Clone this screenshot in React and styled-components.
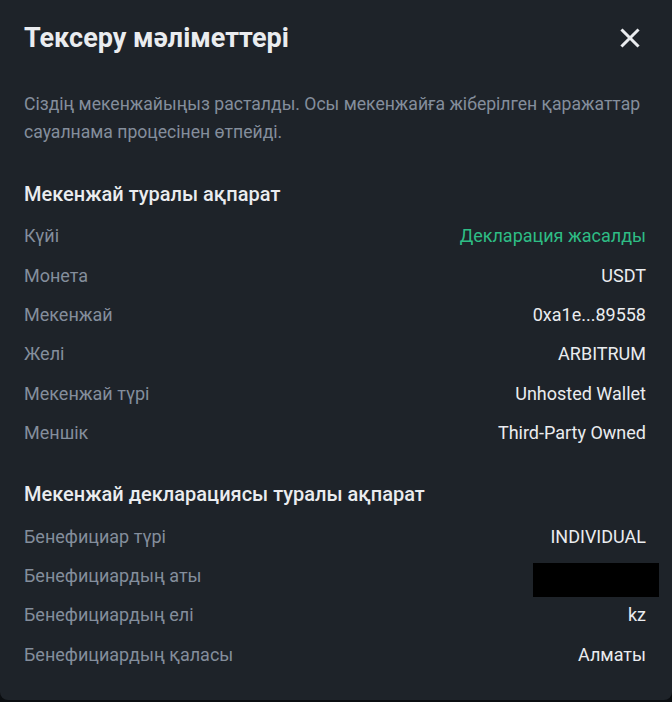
import React from 'react'
import styled, { createGlobalStyle } from 'styled-components'

const GlobalStyle = createGlobalStyle`
    html, body {
        margin: 0;
        padding: 0;
        background: #0b0e11;
    }
    body {
        font-family: Roboto, "Liberation Sans", Arial, sans-serif;
    }
`

const Modal = styled.div`
    width: 672px;
    height: 700px;
    box-sizing: border-box;
    background-color: #1e2329;
    border-radius: 0 0 8px 8px;
    padding: 0 26px 0 24px;
    color: #eaecef;
`
const Header = styled.div`
    height: 76px;
    display: flex;
    align-items: center;
    justify-content: space-between;
`
const Title = styled.h1`
    margin: 0;
    font-size: 27px;
    font-weight: 700;
    line-height: 32px;
    color: #eaecef;
`
const CloseButton = styled.button`
    width: 20px;
    height: 20px;
    padding: 0;
    margin-right: 6px;
    border: none;
    background: transparent;
    display: flex;
    align-items: center;
    justify-content: center;
    cursor: pointer;
`
const Description = styled.p`
    margin: 14px 0 0;
    font-size: 17.6px;
    line-height: 28px;
    color: #848e9c;
`
const SectionTitle = styled.h2`
    margin: ${props => props.first ? "36px" : "30px"} 0 10px;
    font-size: 20px;
    font-weight: 500;
    line-height: 24px;
    color: #eaecef;
`
const Row = styled.div`
    height: 39.4px;
    display: flex;
    align-items: center;
    justify-content: space-between;
    font-size: 18px;
`
const Label = styled.span`
    color: #848e9c;
`
const Value = styled.span`
    color: ${props => props.green ? "#2ebd85" : "#eaecef"};
`
const Redacted = styled.span`
    position: relative;
    top: 5px;
    margin-right: -13px;
    width: 126px;
    height: 34px;
    background: #000;
`

const CloseIcon = () => (
    <svg width="20" height="20" viewBox="0 0 20 20">
        <path d="M2.5 2.5 L17.5 17.5 M17.5 2.5 L2.5 17.5" stroke="#eaecef" strokeWidth="3" strokeLinecap="square" />
    </svg>
)

const addressInfo = [
    { label: "Күйі", value: "Декларация жасалды", green: true },
    { label: "Монета", value: "USDT" },
    { label: "Мекенжай", value: "0xa1e...89558" },
    { label: "Желі", value: "ARBITRUM" },
    { label: "Мекенжай түрі", value: "Unhosted Wallet" },
    { label: "Меншік", value: "Third-Party Owned" },
]

const App = () => {
    return (
        <>
            <GlobalStyle />
            <Modal>
                <Header>
                    <Title>Тексеру мәліметтері</Title>
                    <CloseButton><CloseIcon /></CloseButton>
                </Header>
                <Description>
                    Сіздің мекенжайыңыз расталды. Осы мекенжайға жіберілген қаражаттар сауалнама процесінен өтпейді.
                </Description>

                <SectionTitle first>Мекенжай туралы ақпарат</SectionTitle>
                {addressInfo.map(item => (
                    <Row key={item.label}>
                        <Label>{item.label}</Label>
                        <Value green={item.green}>{item.value}</Value>
                    </Row>
                ))}

                <SectionTitle>Мекенжай декларациясы туралы ақпарат</SectionTitle>
                <Row>
                    <Label>Бенефициар түрі</Label>
                    <Value>INDIVIDUAL</Value>
                </Row>
                <Row>
                    <Label>Бенефициардың аты</Label>
                    <Redacted />
                </Row>
                <Row>
                    <Label>Бенефициардың елі</Label>
                    <Value>kz</Value>
                </Row>
                <Row>
                    <Label>Бенефициардың қаласы</Label>
                    <Value>Алматы</Value>
                </Row>
            </Modal>
        </>
    )
}

export default App
